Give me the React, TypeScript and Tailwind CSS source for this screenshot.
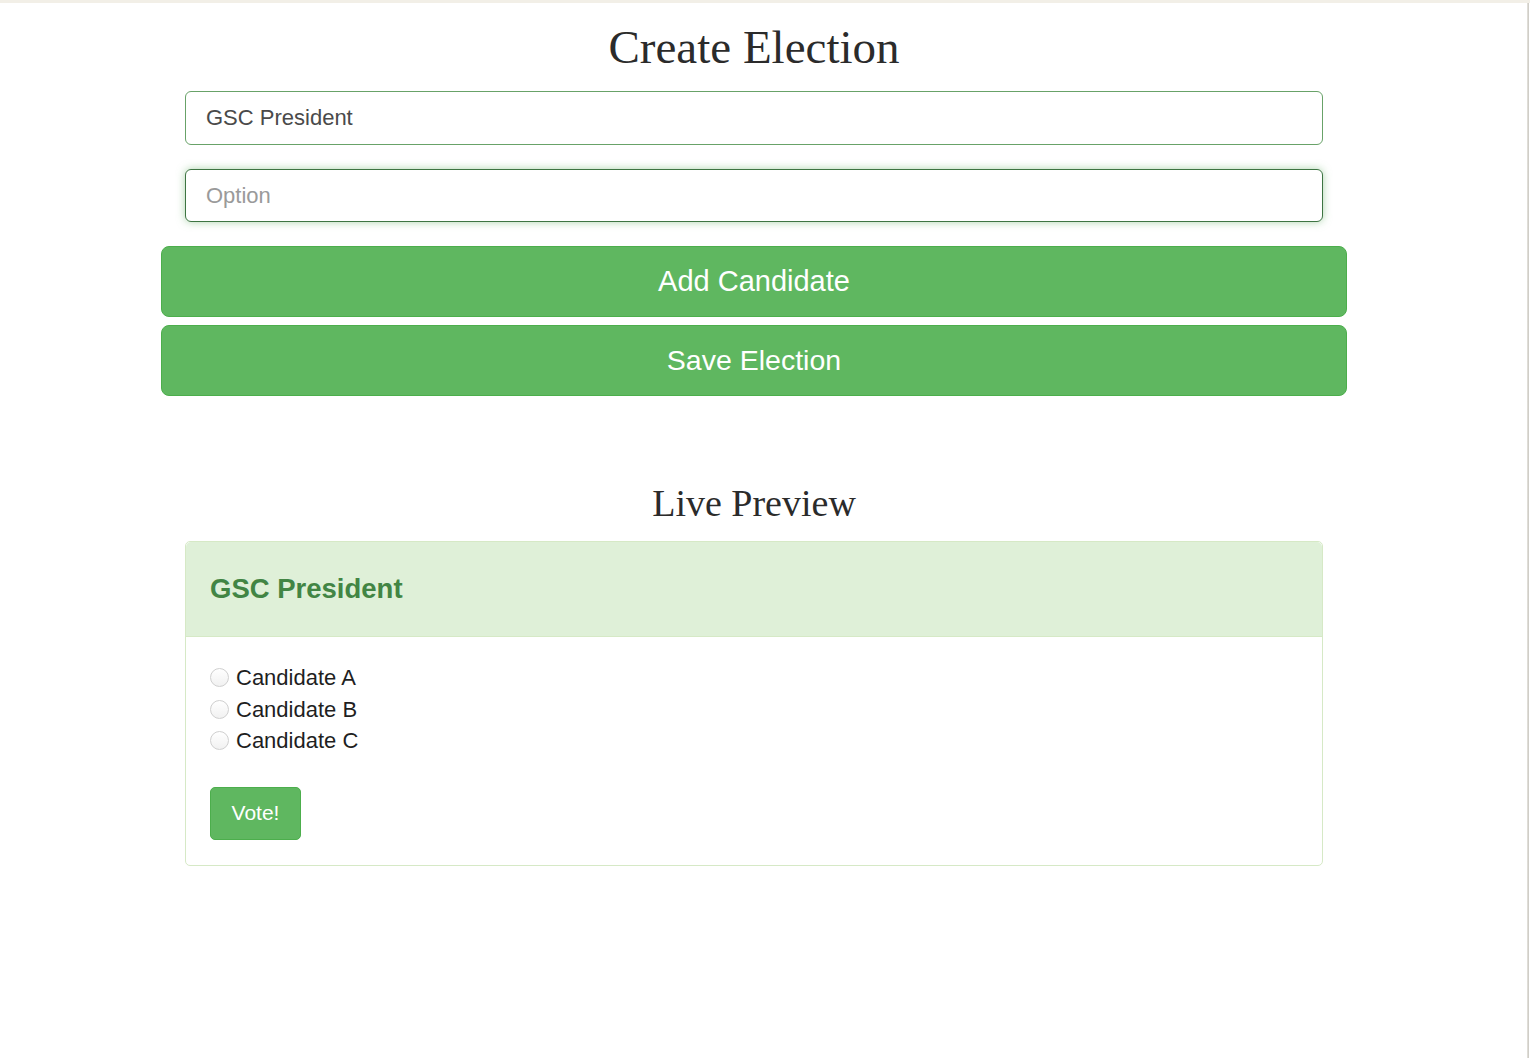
import { useState } from "react";

const candidates = ["Candidate A", "Candidate B", "Candidate C"];

export default function App() {
  const [title, setTitle] = useState("GSC President");
  const [option, setOption] = useState("");

  return (
    <div className="min-h-screen bg-white font-['Liberation_Sans',Arial,sans-serif]">
      <div className="h-[3px] w-full bg-[#f2efe7]" />
      <div className="flex min-h-[1055px]">
        <main className="w-[1508px]">
          <div className="mx-auto w-[1186px]">
            <h1 className="mt-[21px] text-center font-['Liberation_Serif','Times_New_Roman',serif] text-[47px] leading-none text-[#2b2b2b]">
              Create Election
            </h1>

            <div className="mt-[20px] px-6">
              <input
                value={title}
                onChange={(e) => setTitle(e.target.value)}
                className="block h-[54px] w-full rounded-[6px] border-[1.5px] border-[#68a268] bg-white px-[20px] text-[22px] text-[#4a4a4a] outline-none"
              />
              <input
                value={option}
                onChange={(e) => setOption(e.target.value)}
                placeholder="Option"
                className="mt-[24px] block h-[53px] w-full rounded-[6px] border-[1.5px] border-[#3d7442] bg-white px-[20px] text-[22px] text-[#4a4a4a] shadow-[0_0_8px_rgba(102,175,102,0.55)] outline-none placeholder:text-[#9a9a9a]"
              />
            </div>

            <button className="mt-[24px] block h-[71px] w-full rounded-[8px] border border-[#4cae4c] bg-[#5fb760] text-[29px] text-white">
              Add Candidate
            </button>
            <button className="mt-[8px] block h-[71px] w-full rounded-[8px] border border-[#4cae4c] bg-[#5fb760] text-[28.5px] text-white">
              Save Election
            </button>

            <h2 className="mt-[88px] text-center font-['Liberation_Serif','Times_New_Roman',serif] text-[38px] leading-none text-[#2b2b2b]">
              Live Preview
            </h2>

            <div className="mx-6 mt-[19px] rounded-[5px] border border-[#d6e9c6] bg-white">
              <div className="flex h-[95px] items-center rounded-t-[5px] border-b border-[#d6e9c6] bg-[#dff0d8] px-[24px]">
                <h3 className="text-[27.5px] font-bold text-[#428544]">{title}</h3>
              </div>
              <div className="px-[24px] pb-[25px] pt-[25px]">
                {candidates.map((c) => (
                  <label key={c} className="flex h-[31.5px] items-center gap-[7px] text-[22px] text-[#1f1f1f]">
                    <span className="h-[19px] w-[19px] rounded-full border border-[#cfcfcf] bg-gradient-to-b from-white to-[#f1f1f1]" />
                    {c}
                  </label>
                ))}
                <button className="mt-[30px] h-[53px] w-[91px] rounded-[5px] border border-[#4cae4c] bg-[#5fb760] text-[21px] text-white">
                  Vote!
                </button>
              </div>
            </div>
          </div>
        </main>
        <div className="w-[19px]" />
        <div className="w-[2px] bg-gradient-to-r from-[#e6e4de] to-[#c9c7c1]" />
      </div>
    </div>
  );
}
